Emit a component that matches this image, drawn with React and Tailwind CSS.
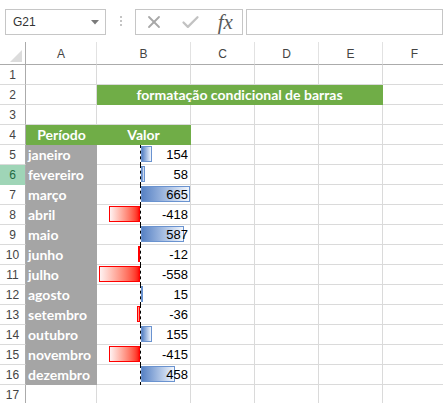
import { X, Check } from 'lucide-react';

const months = [
  ['janeiro', 154],
  ['fevereiro', 58],
  ['março', 665],
  ['abril', -418],
  ['maio', 587],
  ['junho', -12],
  ['julho', -558],
  ['agosto', 15],
  ['setembro', -36],
  ['outubro', 155],
  ['novembro', -415],
  ['dezembro', 458],
];

// 665 fills the 49px right of the axis
const SCALE = 49 / 665;

const cols = ['A', 'B', 'C', 'D', 'E', 'F'];

function Toolbar() {
  return (
    <div className="h-[42px] flex items-start pt-[9px] pl-[5px]">
      <div className="w-[102px] h-[26px] border border-[#c6c6c6] flex items-center justify-between pl-[7px] pr-[6px]">
        <span className="text-[12px] text-[#333]">G21</span>
        <svg width="8" height="5" viewBox="0 0 8 5">
          <path d="M0 0 L8 0 L4 4.5 Z" fill="#7a7a7a" />
        </svg>
      </div>
      <div className="ml-[14px] mt-[7px] flex flex-col gap-[2px]">
        <div className="w-[2px] h-[2px] bg-[#c4c4c4]" />
        <div className="w-[2px] h-[2px] bg-[#c4c4c4]" />
        <div className="w-[2px] h-[2px] bg-[#c4c4c4]" />
      </div>
      <div className="ml-[13px] w-[110px] h-[26px] border border-[#c6c6c6] flex items-center">
        <X size={20} strokeWidth={2.2} color="#a8a8a8" className="ml-[8px]" />
        <Check size={21} strokeWidth={2.6} color="#c2c2c2" className="ml-[16px]" />
        <span className="ml-[17px] text-[21px] italic text-[#5a5a5a] font-['Liberation_Serif',serif] leading-none">fx</span>
      </div>
      <div className="ml-[3px] w-[200px] h-[26px] border border-[#c6c6c6]" />
    </div>
  );
}

function RowHead({ n, active }) {
  return (
    <div
      className={
        'border-r border-b border-r-[#ababab] flex items-center justify-center text-[12px] ' +
        (active ? 'bg-[#9fd5b7] border-b-[#9fd5b7] text-[#1e6b43]' : 'border-b-[#dadada] text-[#444]')
      }
    >
      {n}
    </div>
  );
}

function Empty() {
  return <div className="border-r border-b border-[#dadada]" />;
}

function Bar({ value }) {
  const w = Math.max(2, Math.round(Math.abs(value) * SCALE));
  return (
    <div className="border-r border-b border-[#dadada] grid">
      <div className="col-start-1 row-start-1 flex">
        <div className="w-[43px] flex justify-end">
          {value < 0 && (
            <div
              className="mt-[1px] h-[16px] border border-[#ff0000] bg-linear-to-r from-[#fff2f2] to-[#ff0000]"
              style={{ width: w }}
            />
          )}
        </div>
        <div className="w-0 border-l border-dashed border-black" />
        <div className="flex-1">
          {value > 0 && (
            <div
              className="mt-[1px] h-[16px] border border-[#6a93d0] bg-linear-to-r from-[#5882c4] to-[#f2f6fc]"
              style={{ width: w }}
            />
          )}
        </div>
      </div>
      <div className="col-start-1 row-start-1 flex items-center justify-end pr-[2px] text-[13px] text-black font-['Liberation_Sans',sans-serif]">
        {value}
      </div>
    </div>
  );
}

export default function App() {
  return (
    <div className="w-[443px] h-[403px] overflow-hidden bg-white font-['Liberation_Sans',sans-serif]">
      <Toolbar />

      <div className="grid grid-cols-[26px_71px_94px_64px_64px_64px_64px] grid-rows-[23px_repeat(17,20px)]">
        {/* column headers */}
        <div className="border-r border-b border-r-[#ababab] border-b-[#ababab] flex items-end justify-end pr-[3px] pb-[2px]">
          <svg width="12" height="12" viewBox="0 0 12 12">
            <path d="M12 0 L12 12 L0 12 Z" fill="#dcdcdc" />
          </svg>
        </div>
        {cols.map((c) => (
          <div
            key={c}
            className="border-r border-b border-r-[#e2e2e2] border-b-[#ababab] flex items-center justify-center text-[12px] text-[#444] pt-[1px]"
          >
            {c}
          </div>
        ))}

        {/* row 1 */}
        <RowHead n={1} />
        {cols.map((c) => <Empty key={c} />)}

        {/* row 2 */}
        <RowHead n={2} />
        <Empty />
        <div className="col-span-4 bg-[#70ad47] border-r border-b border-[#70ad47] flex items-center justify-center text-white font-bold text-[14px] font-['Lato',sans-serif]">
          formatação condicional de barras
        </div>
        <Empty />

        {/* row 3 */}
        <RowHead n={3} />
        {cols.map((c) => <Empty key={c} />)}

        {/* row 4 */}
        <RowHead n={4} />
        <div className="bg-[#70ad47] border-b border-[#70ad47] flex items-center justify-center text-white font-bold text-[14px] font-['Lato',sans-serif]">
          Período
        </div>
        <div className="bg-[#70ad47] border-r border-b border-[#70ad47] flex items-center justify-center text-white font-bold text-[14px] font-['Lato',sans-serif]">
          Valor
        </div>
        <Empty />
        <Empty />
        <Empty />
        <Empty />

        {/* rows 5-16 */}
        {months.map(([name, value], i) => (
          <div key={name} className="contents">
            <RowHead n={i + 5} active={i === 1} />
            <div className="bg-[#a5a5a5] border-r border-b border-[#a5a5a5] flex items-center pl-[2px] text-white font-bold text-[14px] font-['Lato',sans-serif]">
              {name}
            </div>
            <Bar value={value} />
            <Empty />
            <Empty />
            <Empty />
            <Empty />
          </div>
        ))}

        {/* row 17 */}
        <RowHead n={17} />
        {cols.map((c) => <Empty key={c} />)}
      </div>
    </div>
  );
}
